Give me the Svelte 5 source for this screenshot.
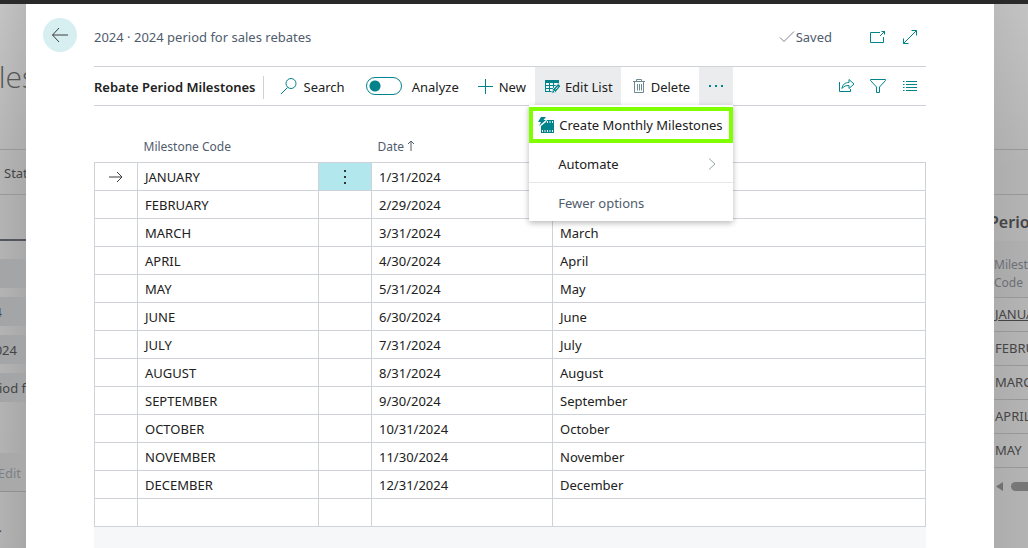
<script>
  const milestones = [
    ['JANUARY', '1/31/2024', ''],
    ['FEBRUARY', '2/29/2024', ''],
    ['MARCH', '3/31/2024', 'March'],
    ['APRIL', '4/30/2024', 'April'],
    ['MAY', '5/31/2024', 'May'],
    ['JUNE', '6/30/2024', 'June'],
    ['JULY', '7/31/2024', 'July'],
    ['AUGUST', '8/31/2024', 'August'],
    ['SEPTEMBER', '9/30/2024', 'September'],
    ['OCTOBER', '10/31/2024', 'October'],
    ['NOVEMBER', '11/30/2024', 'November'],
    ['DECEMBER', '12/31/2024', 'December'],
    ['', '', '']
  ];
  const side = ['JANUARY', 'FEBRUARY', 'MARCH', 'APRIL', 'MAY'];
  let analyze = $state(false);
</script>

<div class="app">
  <div class="topbar"></div>
  <aside class="behind left">
    <div class="page-title">Sales</div>
    <div class="status">Status</div>
    <div class="section"></div>
    <div class="field"></div>
    <div class="field">2024</div>
    <div class="field inset">2024</div>
    <div class="field">2024 period f</div>
    <div class="edit">Edit</div>
    <div class="note">.</div>
  </aside>

  <main>
    <header>
      <button class="back" aria-label="Back">
        <svg width="18" height="16" viewBox="0 0 18 16"><path d="M17 8H1.5M8 1L1.5 8L8 15" /></svg>
      </button>
      <h1>2024 · 2024 period for sales rebates</h1>
      <div class="saved">
        <svg width="16" height="14" viewBox="0 0 16 14"><path d="M1 7.5L5 11.5L15 1.5" /></svg>
        <span>Saved</span>
      </div>
      <button class="icon" aria-label="Open in new window">
        <svg width="18" height="14" viewBox="0 0 18 14"><path d="M11 2.500H1.500V12.500H14.500V7M11 6L16 1M12.500 1.500H15.500V4.500" /></svg>
      </button>
      <button class="icon" aria-label="Expand">
        <svg width="16" height="16" viewBox="0 0 16 16"><path d="M1.500 14.500L14.500 1.500M9.500 1.500H14.500V6.500M1.500 9.500V14.500H6.500" /></svg>
      </button>
    </header>

    <div class="body">
      <div class="toolbar">
        <h2>Rebate Period Milestones</h2>
        <button class="search">
          <svg width="18" height="18" viewBox="0 0 18 18"><circle cx="11" cy="6.500" r="5" /><path d="M7.500 10.500L1 17" /></svg>
          Search
        </button>
        <label class="analyze">
          <input type="checkbox" role="switch" bind:checked={analyze} />
          Analyze
        </label>
        <button class="new">
          <svg width="16" height="16" viewBox="0 0 16 16"><path d="M8.500 1V16M1 8.500H16" /></svg>
          New
        </button>
        <button class="edit-list">
          <svg width="16" height="16" viewBox="0 0 16 16">
            <path class="solid" d="M0 2H14V14H0Z" />
            <path class="hole" d="M1 5H4V7H1ZM5 5H8V7H5ZM9 5H13V7H9ZM1 8H4V10H1ZM5 8H8V10H5ZM9 8H13V10H9ZM1 11H4V13H1ZM5 11H8V13H5ZM8 10H14V14H8Z" />
            <path class="pencil" d="M6.500 15.500L7.500 11.500L13 5.500L16 8L10.500 14.500Z" />
            <path class="cells" d="M8.500 12.500L10 14M10.500 11.500L13 8.500" />
          </svg>
          Edit List
        </button>
        <button class="delete">
          <svg class="bin" width="14" height="16" viewBox="0 0 14 16"><path d="M1 3.500H13M4.500 3V1.500H9.500V3M2.500 4V14.500H11.500V4M5.500 6V12.500M7.500 6V12.500M9.500 6V12.500" /></svg>
          Delete
        </button>
        <div class="more-wrap">
          <button class="more" aria-label="More options">
            <svg width="16" height="4" viewBox="0 0 16 4"><path class="solid" d="M1 1H3V3H1ZM7 1H9V3H7ZM13 1H15V3H13Z" /></svg>
          </button>
          <div class="menu">
            <button class="marked">
              <svg width="17" height="17" viewBox="0 0 17 17">
                <path class="solid" d="M3 0H8L5.500 3H8L1 9L3 5H0Z" />
                <path class="solid" d="M9 3H16V16H3V9L8 5Z" />
                <path class="hole" d="M9 4H10V6H9ZM11.500 4H12.500V6H11.500ZM14 4H15V6H14ZM4 13H5V15H4ZM6.500 13H7.500V15H6.500ZM9 13H10V15H9ZM11.500 13H12.500V15H11.500ZM14 13H15V15H14Z" />
              </svg>
              Create Monthly Milestones
            </button>
            <button>
              Automate
              <svg class="chevron" width="8" height="14" viewBox="0 0 8 14"><path d="M1 1.500L7 7L1 12.500" /></svg>
            </button>
            <button class="fewer">Fewer options</button>
          </div>
        </div>
        <div class="tools">
          <button class="icon" aria-label="Share">
            <svg width="17" height="16" viewBox="0 0 17 16"><path d="M1.500 4V13.500H12.500V11M4 10.500C4.500 6.500 7 4.500 11 4.500V1.500L16 6L11 10.500V7.500C8 7.500 6 8 4 10.500Z" /></svg>
          </button>
          <button class="icon" aria-label="Filter">
            <svg width="18" height="16" viewBox="0 0 18 16"><path d="M1.500 1.500H16.500V2.500L10.500 9V14.500H7.500V9L1.500 2.500Z" /></svg>
          </button>
          <button class="icon" aria-label="List view">
            <svg width="16" height="14" viewBox="0 0 16 14"><path d="M1 2.500H2.500M4 2.500H15M1 5.500H2.500M4 5.500H15M1 8.500H2.500M4 8.500H15M1 11.500H2.500M4 11.500H15" /></svg>
          </button>
        </div>
      </div>

      <table>
        <colgroup><col class="c-mark" /><col class="c-code" /><col class="c-menu" /><col class="c-date" /><col /></colgroup>
        <thead>
          <tr>
            <th></th>
            <th>Milestone Code</th>
            <th></th>
            <th>Date <svg width="8" height="11" viewBox="0 0 8 11"><path d="M4 11V1M1 4L4 1L7 4" /></svg></th>
            <th></th>
          </tr>
        </thead>
        <tbody>
          {#each milestones as [code, date, name], i}
            <tr>
              <td class="mark">
                {#if i === 0}<svg width="14" height="12" viewBox="0 0 14 12"><path d="M0 6H13M8 1L13 6L8 11" /></svg>{/if}
              </td>
              <td>{code}</td>
              <td class:active={i === 0}>
                {#if i === 0}
                  <button class="row-menu" aria-label="Row options">
                    <svg width="4" height="16" viewBox="0 0 4 16"><path d="M1 1H3V3H1ZM1 7H3V9H1ZM1 13H3V15H1Z" /></svg>
                  </button>
                {/if}
              </td>
              <td>{date}</td>
              <td>{name}</td>
            </tr>
          {/each}
        </tbody>
      </table>
      <div class="rest"></div>
    </div>
  </main>

  <aside class="behind right">
    <div class="r-top"></div>
    <h3>Period</h3>
    <div class="r-head">Milestone<br />Code</div>
    {#each side as code, i}
      <div class="r-row"><span class:link={i === 0}>{code}</span></div>
    {/each}
    <div class="scroll">
      <svg width="7" height="9" viewBox="0 0 7 9"><path d="M7 0V9L0 4.500Z" /></svg>
      <span></span>
    </div>
  </aside>
</div>

<style>
  :global(body) { margin: 0; }
  .app {
    display: grid;
    grid-template-columns: 26px minmax(0, 1fr) 34px;
    grid-template-rows: 4px 1fr;
    height: 100vh;
    overflow: hidden;
    font: 13px/20px 'Noto Sans', 'Open Sans', sans-serif;
    color: #212121;
    background: #fff;
  }
  .topbar { grid-column: 1 / -1; background: #292929; }
  h1, h2, h3 { margin: 0; font-weight: 400; font-size: 13px; }
  button {
    display: flex;
    align-items: center;
    padding: 0;
    border: 0;
    background: none;
    color: inherit;
    font: inherit;
    white-space: nowrap;
    cursor: pointer;
  }
  svg { flex: none; fill: none; stroke: #00838a; }
  .solid { fill: #00838a; stroke: none; }
  .hole { fill: #f4f6f6; stroke: none; }
  .pencil { fill: #00838a; stroke: #ebecee; }
  .cells { stroke: #ebecee; }

  .behind { box-sizing: border-box; overflow: hidden; white-space: nowrap; color: #454545; }
  .left { background: linear-gradient(to right, transparent, rgba(0, 0, 0, .06)), linear-gradient(#c3c3c3, #b4b4b4 30%, #b2b2b2); }
  .left > div { display: flex; align-items: center; justify-content: flex-end; box-sizing: border-box; }
  .left > .page-title { height: 146px; margin-right: -10px; font: 300 30px/40px 'Open Sans', 'Noto Sans', sans-serif; color: #555; border-bottom: 1px solid #979797; }
  .left > .status { height: 45px; justify-content: flex-start; padding: 2px 0 0 4px; border-bottom: 1px solid #979797; }
  .left > .section { height: 46px; margin-bottom: 18px; border-bottom: 2px solid #50565b; }
  .left > .field { height: 29px; margin-bottom: 9px; background: #a3a5a6; }
  .left > .field:nth-child(5) { padding-right: 24px; }
  .left > .inset { padding-right: 9px; }
  .left > .edit { height: 39px; margin-top: 51px; padding: 2px 5px 0 0; color: #7c8084; background: #a9a9a9; border-bottom: 1px solid #8f8f8f; }
  .left > .note { height: 70px; padding-right: 24px; }

  main { background: #fff; min-width: 0; }
  header { display: flex; align-items: center; height: 62px; padding: 0 68px 0 17px; }
  .back { width: 34px; height: 34px; justify-content: center; border-radius: 50%; background: #d7eff1; }
  .back svg, .mark svg { stroke: #3c3c3c; }
  h1 { flex: 1; padding: 4px 0 0 17px; color: #505c6d; }
  .saved { display: flex; align-items: center; gap: 1px; padding: 4px 30px 0 0; color: #505c6d; }
  .saved svg { stroke: #7b8492; }
  .icon { width: 32px; height: 20px; justify-content: center; }
  header .icon { padding-top: 4px; }

  .body { display: flex; flex-direction: column; height: calc(100% - 62px); padding: 0 68px; }
  .toolbar { display: flex; flex: none; height: 38px; border: solid #d0d2da; border-width: 1px 0; }
  .toolbar > * { align-self: stretch; padding-top: 2px; }
  .toolbar svg { margin-top: -2px; }
  .toolbar .more svg, .toolbar .menu svg { margin-top: 0; }
  h2 { display: flex; align-items: center; font-weight: 600; white-space: nowrap; padding-right: 8px; }
  h2::after { content: ''; height: 23px; margin-left: 7px; margin-right: -8px; border-left: 1px solid #d0d2da; }
  .search { margin-left: 16px; gap: 6px; }
  .analyze { display: flex; align-items: center; gap: 10px; margin-left: 21px; }
  .analyze input {
    appearance: none;
    box-sizing: border-box;
    width: 36px;
    height: 18px;
    margin: -2px 0 0;
    border: 1px solid #00838a;
    border-radius: 9px;
    background: radial-gradient(circle at 8px 8px, #00838a 5px, transparent 6px);
  }
  .analyze input:checked { background: radial-gradient(circle at 26px 8px, #00838a 5px, transparent 6px); }
  .new { gap: 6px; margin-left: 18px; }
  .edit-list { gap: 4px; margin-left: 9px; padding: 2px 8px 0 10px; background: #ebecee; }
  .delete { gap: 5px; padding: 2px 9px 0 11px; }
  .bin { stroke: #6d8a92; }
  .toolbar > .more-wrap { position: relative; display: flex; padding: 0; }
  .more { width: 34px; justify-content: center; background: #ebecee; }
  .menu {
    position: absolute;
    z-index: 2;
    top: 38px;
    right: 0;
    width: 204px;
    background: #fff;
    box-shadow: 0 2px 6px rgba(0, 0, 0, .28);
  }
  .menu button { box-sizing: border-box; width: 100%; height: 39px; padding: 2px 17px 0 29px; justify-content: space-between; border-top: 1px solid #e6e7e9; }
  .menu .marked { height: 36px; margin: 2px 0 0; padding: 0 0 0 5px; justify-content: flex-start; gap: 4px; border: 4px solid #80ff00; }
  .menu .marked + button { border-top-color: transparent; }
  .menu .fewer { color: #505c6d; }
  .menu .chevron { stroke: #97a3a6; }
  .tools { display: flex; align-items: center; margin-left: auto; }

  table { width: 100%; table-layout: fixed; border-collapse: collapse; }
  .c-mark { width: 43px; }
  .c-code { width: 181px; }
  .c-menu { width: 53px; }
  .c-date { width: 181px; }
  th { height: 56px; box-sizing: border-box; padding: 26px 6px 0; text-align: left; font-weight: 400; font-size: 12px; color: #505c6d; }
  th svg { stroke: #505c6d; }
  td { box-sizing: border-box; height: 28px; padding: 2px 7px 0; border: 1px solid #d0d2da; }
  .mark { text-align: center; line-height: 12px; }
  .active { padding: 2px 0 0; background: #b2e8ed; }
  .row-menu { width: 100%; justify-content: center; }
  .row-menu svg { fill: #333; stroke: none; }
  .rest { flex: 1; background: #f5f7f9; }

  .right { background: linear-gradient(to right, rgba(0, 0, 0, .04), transparent), linear-gradient(#c3c3c3, #b4b4b4 30%, #b4b4b4); }
  .r-top { height: 191px; border-bottom: 1px solid #979797; box-sizing: border-box; background: linear-gradient(#979797, #979797) 0 145px / 100% 1px no-repeat; }
  h3 { height: 46px; margin-left: -5px; font-size: 16px; line-height: 54px; font-weight: 600; color: #454545; }
  .r-head { height: 57px; padding-top: 15px; box-sizing: border-box; font-size: 12px; line-height: 18px; color: #6c6f75; background: rgba(0, 0, 0, .02); border-bottom: 1px solid #979797; }
  .r-row { display: flex; align-items: center; height: 34px; box-sizing: border-box; padding: 0 0 1px 1px; border-bottom: 1px solid #979797; }
  .link { text-decoration: underline; }
  .scroll { display: flex; align-items: center; gap: 8px; padding: 14px 0 0 2px; }
  .scroll svg { fill: #707070; stroke: none; }
  .scroll span { flex: 1; height: 9px; border-radius: 5px 0 0 5px; background: #777; }
</style>
